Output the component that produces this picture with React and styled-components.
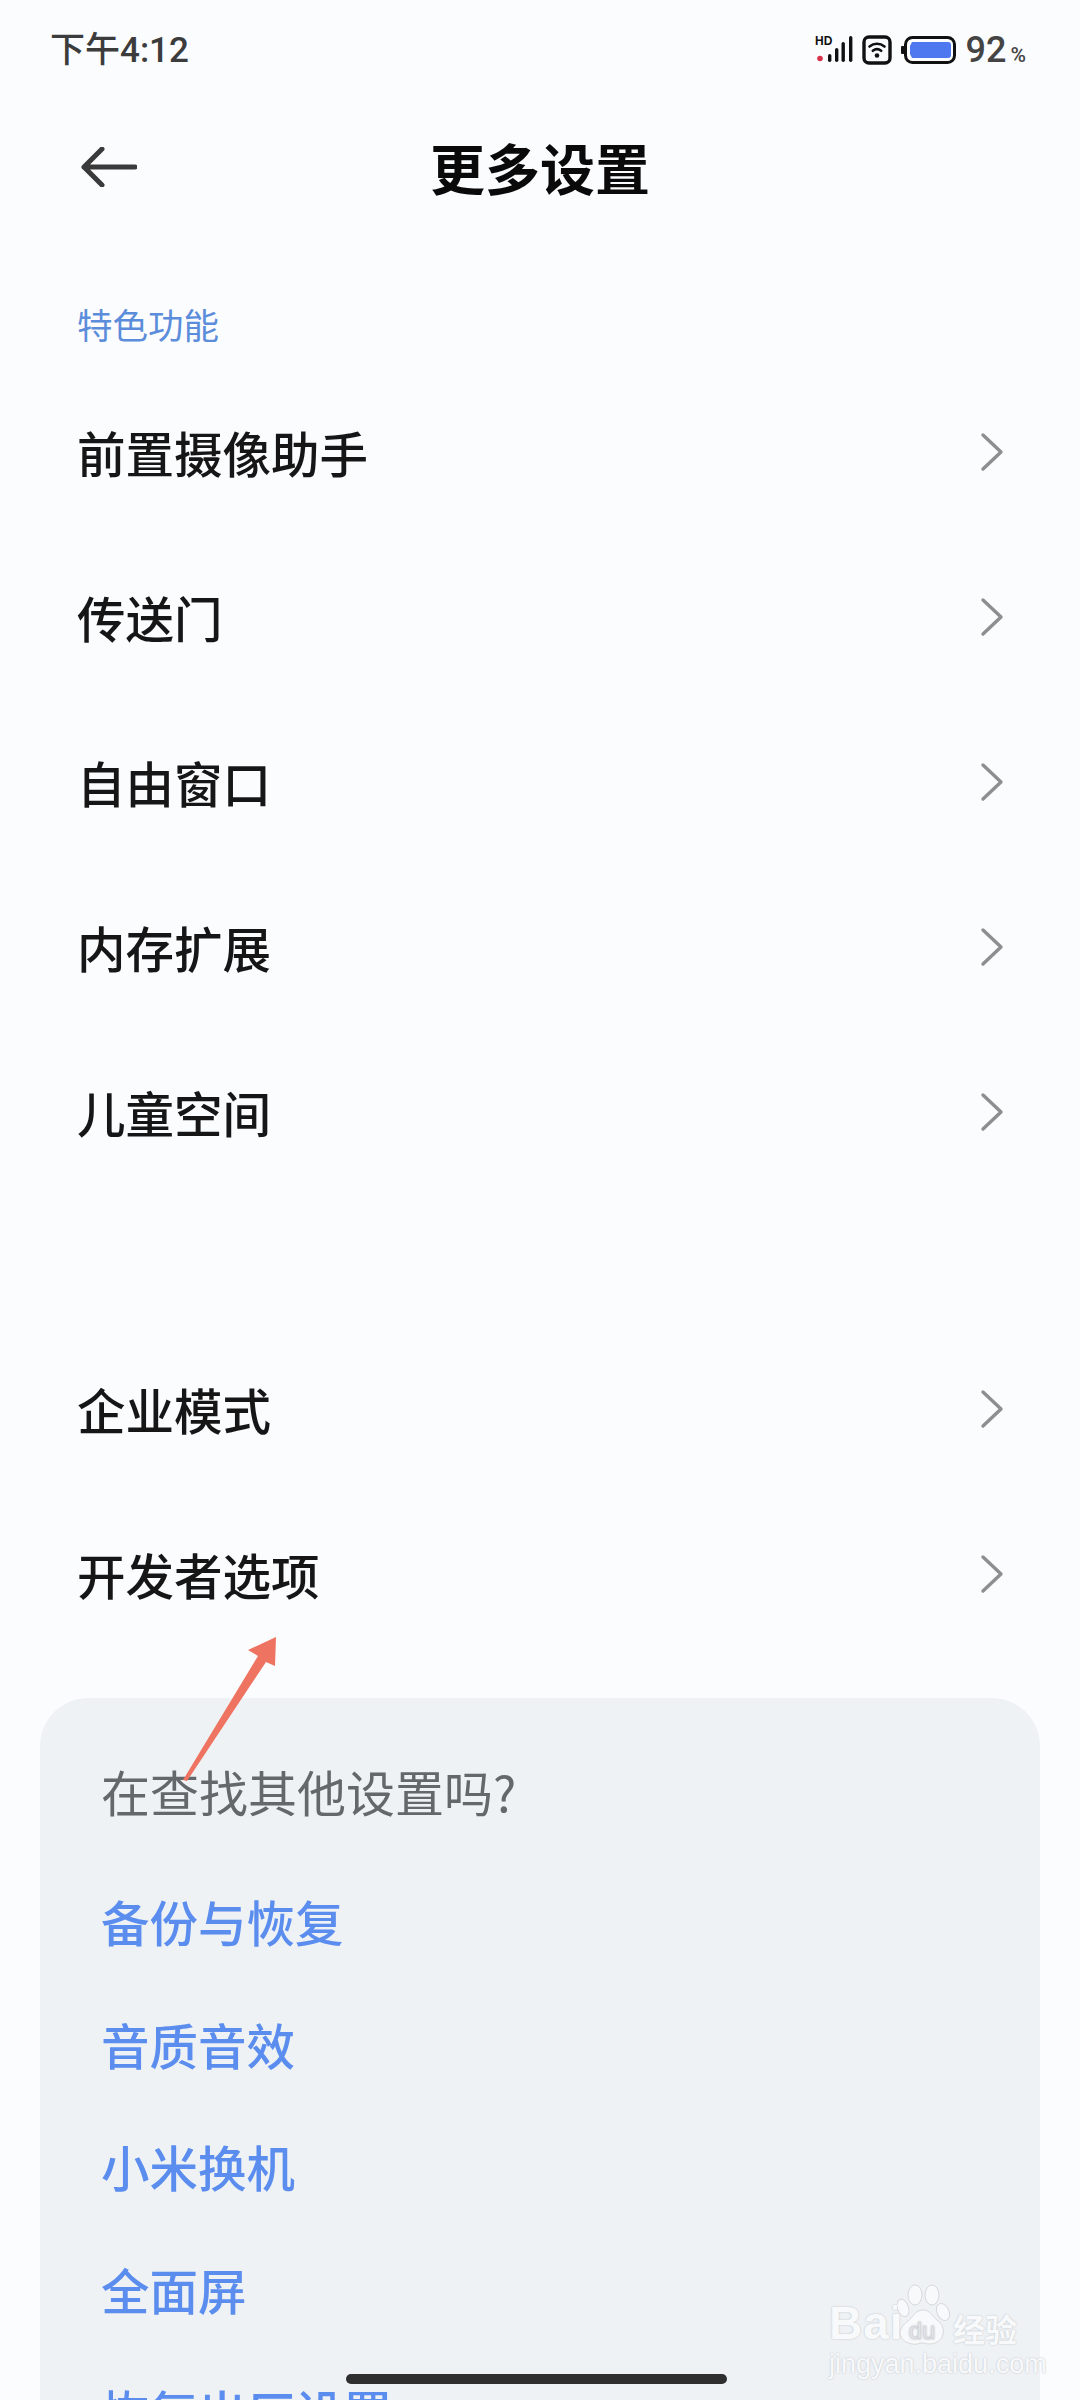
import React from "react";
import styled, { createGlobalStyle } from "styled-components";

const GlobalStyle = createGlobalStyle`
  html, body {
    margin: 0;
    padding: 0;
    background: #fbfcfe;
  }
  * {
    box-sizing: border-box;
  }
`;

const FONT = `"Noto Sans CJK SC", "Noto Sans", sans-serif`;

const featureItems = ["前置摄像助手", "传送门", "自由窗口", "内存扩展", "儿童空间"];
const otherItems = ["企业模式", "开发者选项"];
const linkItems = ["备份与恢复", "音质音效", "小米换机", "全面屏", "恢复出厂设置"];

const App = () => {
  return (
    <>
      <GlobalStyle />
      <Page>
        <StatusBar>
          <Time>下午4:12</Time>
          <StatusIcons>
            <SignalIcon />
            <WifiIcon />
            <BatteryIcon />
            <Percent>
              92<small>%</small>
            </Percent>
          </StatusIcons>
        </StatusBar>

        <Header>
          <BackButton>
            <svg width="56" height="40" viewBox="0 0 56 40" fill="none">
              <path
                d="M54 20H3M21 2 3 20l18 18"
                stroke="#3a3a3a"
                strokeWidth="5"
                strokeLinecap="round"
                strokeLinejoin="round"
              />
            </svg>
          </BackButton>
          <Title>更多设置</Title>
        </Header>

        <SectionLabel>特色功能</SectionLabel>
        <List>
          {featureItems.map((item) => (
            <Row key={item}>
              {item}
              <Chevron />
            </Row>
          ))}
        </List>

        <List $gap>
          {otherItems.map((item) => (
            <Row key={item}>
              {item}
              <Chevron />
            </Row>
          ))}
        </List>

        <Card>
          <CardTitle>在查找其他设置吗?</CardTitle>
          {linkItems.map((item) => (
            <CardLink key={item}>{item}</CardLink>
          ))}
        </Card>

        <Annotation width="110" height="160" viewBox="0 0 110 160">
          <path d="M1 146 76 22 66 16 94 3 93 32 84 28 5 147z" fill="#ee7360" />
        </Annotation>

        <Watermark>
          <WatermarkLogo>
            <span>Bai</span>
            <PawIcon />
            <b>经验</b>
          </WatermarkLogo>
          <WatermarkUrl>jingyan.baidu.com</WatermarkUrl>
        </Watermark>

        <HomeBar />
      </Page>
    </>
  );
};

export default App;

const SignalIcon = () => (
  <svg width="38" height="30" viewBox="0 0 38 30">
    <text x="0" y="10" fontFamily="Liberation Sans" fontSize="12" fontWeight="700" fill="#111">
      HD
    </text>
    <circle cx="5" cy="23.5" r="2.8" fill="#d9314c" />
    <rect x="13" y="19" width="3.4" height="8" rx="1.7" fill="#111" />
    <rect x="20" y="13" width="3.4" height="14" rx="1.7" fill="#111" />
    <rect x="26.5" y="7" width="3.4" height="20" rx="1.7" fill="#111" />
    <rect x="34" y="1" width="3.4" height="26" rx="1.7" fill="#111" />
  </svg>
);

const WifiIcon = () => (
  <svg width="30" height="30" viewBox="0 0 30 30" fill="none">
    <rect x="2" y="2" width="26" height="26" rx="5" stroke="#111" strokeWidth="3.4" />
    <path d="M7.5 11.5c4.5-3.6 10.5-3.6 15 0" stroke="#111" strokeWidth="2.6" strokeLinecap="round" />
    <path d="M10.8 15.8c2.6-2 5.8-2 8.4 0" stroke="#111" strokeWidth="2.6" strokeLinecap="round" />
    <circle cx="15" cy="20.5" r="2.3" fill="#111" />
  </svg>
);

const BatteryIcon = () => (
  <svg width="55" height="29" viewBox="0 0 55 29" fill="none">
    <rect x="0" y="10" width="3.4" height="8" rx="1" fill="#111" />
    <rect x="4.5" y="1.5" width="49" height="25" rx="7" stroke="#111" strokeWidth="3" />
    <path d="M11 6h36a3 3 0 0 1 3 3v10a3 3 0 0 1-3 3H11l-2-4v-8z" fill="#4d78f0" />
  </svg>
);

const Chevron = () => (
  <ChevronIcon width="24" height="40" viewBox="0 0 24 40" fill="none">
    <path
      d="M3 3l18 17L3 37"
      stroke="#8c8e90"
      strokeWidth="3.4"
      strokeLinecap="round"
      strokeLinejoin="round"
    />
  </ChevronIcon>
);

const PawIcon = () => (
  <svg width="54" height="62" viewBox="0 0 54 62">
    <g fill="#f8f9fb" stroke="#d6d9dc" strokeWidth="1">
      <ellipse cx="18" cy="11" rx="7" ry="10" />
      <ellipse cx="35" cy="11" rx="7" ry="10" />
      <ellipse cx="6" cy="24" rx="5.5" ry="9" transform="rotate(-20 6 24)" />
      <ellipse cx="46" cy="28" rx="6" ry="9" transform="rotate(-25 46 28)" />
      <path d="M26 26c7 0 9 6 14 10 6 5 7 9 6 14-1 7-8 10-14 10-3 0-4-1-7-1s-5 2-10 1c-6-1-12-5-12-11 0-5 4-9 8-12 5-4 7-11 15-11z" />
    </g>
    <text
      x="25"
      y="55"
      textAnchor="middle"
      fontFamily="Liberation Sans"
      fontSize="24"
      fill="#eef1f4"
      stroke="#d2d5d9"
      strokeWidth="0.5"
    >
      du
    </text>
  </svg>
);

const Page = styled.div`
  position: relative;
  width: 1080px;
  height: 2400px;
  overflow: hidden;
  background: #fbfcfe;
  font-family: ${FONT};
`;

const StatusBar = styled.div`
  display: flex;
  justify-content: space-between;
  align-items: center;
  height: 100px;
  padding: 0 54px 0 50px;
`;

const Time = styled.div`
  font-family: "Roboto", ${FONT};
  font-size: 35px;
  font-weight: 500;
  line-height: 1;
  color: #3c3c3c;
`;

const StatusIcons = styled.div`
  display: flex;
  align-items: center;
  gap: 9px;
  margin-left: auto;
`;

const Percent = styled.div`
  margin-left: 1px;
  font-family: "Roboto", sans-serif;
  font-size: 36px;
  font-weight: 500;
  line-height: 1;
  color: #444;

  small {
    margin-left: 4px;
    font-size: 21px;
  }
`;

const Header = styled.div`
  position: relative;
  display: flex;
  align-items: center;
  justify-content: center;
  height: 138px;
  padding-bottom: 6px;
`;

const BackButton = styled.div`
  position: absolute;
  left: 81px;
  top: 47px;
  display: flex;
`;

const Title = styled.div`
  font-size: 55px;
  font-weight: 700;
  line-height: 1;
  color: #0a0a0a;
`;

const SectionLabel = styled.div`
  height: 134.5px;
  padding: 64px 0 0 77px;
  font-size: 35.5px;
  line-height: 44px;
  color: #5b8ddb;
`;

const List = styled.div`
  display: flex;
  flex-direction: column;
  margin-top: ${(props) => (props.$gap ? "132px" : "0")};
`;

const Row = styled.div`
  display: flex;
  align-items: center;
  justify-content: space-between;
  height: 165px;
  padding: 0 76px 6px 77px;
  font-size: 48.5px;
  font-weight: 500;
  color: #161616;
`;

const ChevronIcon = styled.svg`
  flex-shrink: 0;
`;

const Card = styled.div`
  margin: 38.5px 40px 0;
  height: 900px;
  padding: 57px 61px 0;
  border-radius: 48px 48px 0 0;
  background: #eff2f5;
`;

const CardTitle = styled.div`
  height: 105px;
  font-size: 49px;
  line-height: 72px;
  color: #65686b;
`;

const CardLink = styled.div`
  height: 122.5px;
  font-size: 48.5px;
  font-weight: 500;
  line-height: 122.5px;
  color: #5b8def;
`;

const Annotation = styled.svg`
  position: absolute;
  left: 182px;
  top: 1634px;
`;

const Watermark = styled.div`
  position: absolute;
  left: 829px;
  top: 2284px;
  width: 195px;
  display: flex;
  flex-direction: column;
`;

const WatermarkLogo = styled.div`
  display: flex;
  align-items: flex-end;
  height: 62px;
  color: #f8f9fb;
  text-shadow: 0 0 2px #b9bdc2;

  span {
    width: 68px;
    font-family: "Liberation Sans", sans-serif;
    font-size: 46px;
    font-weight: 700;
    line-height: 46px;
    letter-spacing: 1px;
  }

  svg {
    flex-shrink: 0;
  }

  b {
    margin-left: 2px;
    font-size: 32px;
    font-weight: 700;
    line-height: 36px;
    white-space: nowrap;
  }
`;

const WatermarkUrl = styled.div`
  margin-top: 4px;
  font-family: "Liberation Sans", sans-serif;
  font-size: 27px;
  line-height: 28px;
  color: #f8f9fb;
  text-shadow: 0 0 2px #b9bdc2;
  white-space: nowrap;
`;

const HomeBar = styled.div`
  position: absolute;
  left: 346px;
  top: 2374px;
  width: 381px;
  height: 10px;
  border-radius: 5px;
  background: #2f2f2f;
`;
